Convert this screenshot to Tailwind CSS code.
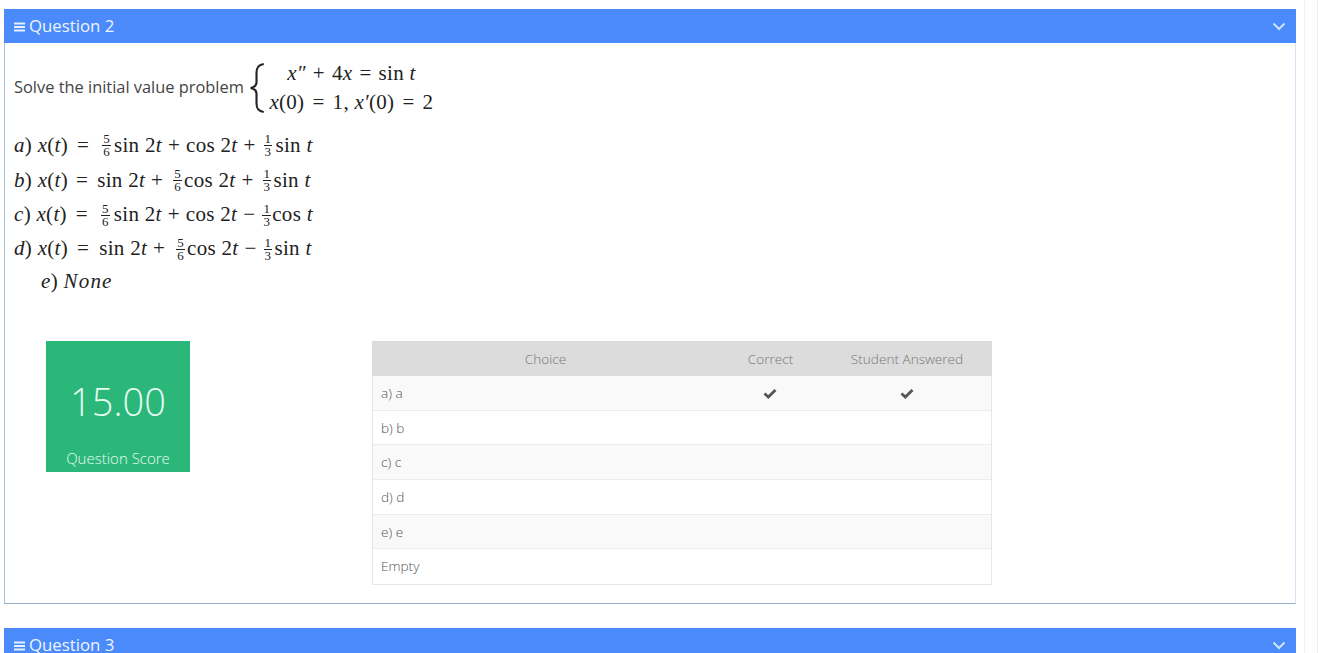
<!DOCTYPE html>
<html>
<head>
<meta charset="utf-8">
<script src="https://cdn.jsdelivr.net/npm/@tailwindcss/browser@4"></script>
</head>
<body class="bg-white overflow-hidden font-['Open_Sans',sans-serif]">
<div class="w-[1321px] h-[653px] overflow-hidden flex bg-white">
  <div class="w-[1305px] pl-[4px] pr-[8px] pt-[9px] border-r border-[#f1f0ef] h-full">
    <div class="h-[34px] bg-[#4a8afb] flex items-center justify-between pl-[10px] pr-[10px] text-white">
      <div class="flex items-center gap-[4px] text-[16.800px] text-[#eef5ff]">
        <svg width="11" height="10" viewBox="0 0 11 10" class="mt-[1px]"><path d="M0 1.500h11M0 5h11M0 8.500h11" stroke="#e6f0ff" stroke-width="1.800"/></svg>
        <span>Question 2</span>
      </div>
      <svg width="14" height="9" viewBox="0 0 14 9"><path d="M1.500 1.500L7 7l5.500-5.500" fill="none" stroke="#cfe3ff" stroke-width="2"/></svg>
    </div>
    <div class="h-[561px] border-l border-r border-b border-l-[#a9c3dc] border-r-[#d5e3f2] border-b-[#8fb0cf] pl-[9px] pt-[15px]">
      <div class="flex items-center h-[60px] text-[#444]">
        <span class="text-[16.400px] leading-none mt-[-1px]">Solve the initial value problem</span>
        <svg width="20" height="52" viewBox="0 0 20 54" class="ml-[3px] mr-[1px]"><path d="M17 2C11 3 9.500 6 9.500 11v10c0 3-2 5-6 6 4 1 6 3 6 6v10c0 5 1.500 8 7.500 9" fill="none" stroke="#222" stroke-width="2.200"/></svg>
        <div class="font-['Liberation_Serif',serif] text-[21px] tracking-[0.3px] leading-[29px] text-[#222] w-[167px] flex flex-col items-center">
          <div class="whitespace-nowrap"><i>x″</i><span class="mx-[7px]">+</span>4<i>x</i><span class="mx-[7px]">=</span>sin <i>t</i></div>
          <div class="whitespace-nowrap"><i>x</i>(0)<span class="mx-[8px]">=</span>1, <i>x′</i>(0)<span class="mx-[8px]">=</span>2</div>
        </div>
      </div>
      <div class="font-['Liberation_Serif',serif] text-[21px] tracking-[0.3px] text-[#222] mt-[10px] whitespace-nowrap">
        <div class="h-[35px] flex items-center"><span><i>a</i>) <i>x</i>(<i>t</i>)<span class="ml-[9px]">=</span></span><span class="inline-flex flex-col items-center text-[13px] leading-[12px] ml-[13px] mr-[3px]"><span class="border-b border-[#222] px-[1px]">5</span><span>6</span></span><span>sin 2<i>t</i><span class="mx-[6px]">+</span>cos 2<i>t</i><span class="mx-[6px]">+</span></span><span class="inline-flex flex-col items-center text-[13px] leading-[12px] ml-[2px] mr-[3px]"><span class="border-b border-[#222] px-[1px]">1</span><span>3</span></span><span>sin <i>t</i></span></div>
        <div class="h-[35px] flex items-center"><span><i>b</i>) <i>x</i>(<i>t</i>)<span class="ml-[8px] mr-[9px]">=</span>sin 2<i>t</i><span class="mx-[6px]">+</span></span><span class="inline-flex flex-col items-center text-[13px] leading-[12px] ml-[4px] mr-[2px]"><span class="border-b border-[#222] px-[1px]">5</span><span>6</span></span><span>cos 2<i>t</i><span class="mx-[6px]">+</span></span><span class="inline-flex flex-col items-center text-[13px] leading-[12px] ml-[3px] mr-[2px]"><span class="border-b border-[#222] px-[1px]">1</span><span>3</span></span><span>sin <i>t</i></span></div>
        <div class="h-[34px] flex items-center"><span><i>c</i>) <i>x</i>(<i>t</i>)<span class="ml-[9px]">=</span></span><span class="inline-flex flex-col items-center text-[13px] leading-[12px] ml-[13px] mr-[4px]"><span class="border-b border-[#222] px-[1px]">5</span><span>6</span></span><span>sin 2<i>t</i><span class="mx-[6px]">+</span>cos 2<i>t</i><span class="mx-[6px]">−</span></span><span class="inline-flex flex-col items-center text-[13px] leading-[12px] ml-[1px] mr-[1px]"><span class="border-b border-[#222] px-[1px]">1</span><span>3</span></span><span>cos <i>t</i></span></div>
        <div class="h-[34px] flex items-center"><span><i>d</i>) <i>x</i>(<i>t</i>)<span class="ml-[9px] mr-[10px]">=</span>sin 2<i>t</i><span class="mx-[6px]">+</span></span><span class="inline-flex flex-col items-center text-[13px] leading-[12px] ml-[5px] mr-[2px]"><span class="border-b border-[#222] px-[1px]">5</span><span>6</span></span><span>cos 2<i>t</i><span class="mx-[6px]">−</span></span><span class="inline-flex flex-col items-center text-[13px] leading-[12px] ml-[1px] mr-[2px]"><span class="border-b border-[#222] px-[1px]">1</span><span>3</span></span><span>sin <i>t</i></span></div>
        <div class="h-[32px] flex items-center pl-[27px]"><span><i>e</i>) <i class="tracking-[1.200px]">None</i></span></div>
      </div>
      <div class="flex mt-[43px] pl-[32px]">
        <div class="w-[144px] h-[131px] bg-[#2bb779] text-[#e6fbf1] flex flex-col items-center shrink-0">
          <div class="text-[38px] font-light leading-none mt-[41px]">15.00</div>
          <div class="text-[15px] font-light leading-none mt-[31px]">Question Score</div>
        </div>
        <div class="ml-[182px] w-[620px] text-[13.600px] font-light text-[#555] border-x border-b border-[#e6e6e6]">
          <div class="flex h-[35px] items-center bg-[#dcdcdc] text-[#777] -mx-px pt-[1px]">
            <div class="w-[347px] text-center">Choice</div>
            <div class="w-[103px] text-center">Correct</div>
            <div class="w-[170px] text-center">Student Answered</div>
          </div>
          <div class="flex h-[35px] items-center bg-[#faf9f9] border-b border-[#ececec] pt-[1px]">
            <div class="w-[346px] pl-[8px]">a) a</div>
            <div class="w-[103px] pl-[1px] flex justify-center"><svg width="14" height="11" viewBox="0 0 14 11"><path d="M1.500 5.500L5.300 9 12.500 2" fill="none" stroke="#555" stroke-width="2.800"/></svg></div>
            <div class="w-[170px] pl-[1px] flex justify-center"><svg width="14" height="11" viewBox="0 0 14 11"><path d="M1.500 5.500L5.300 9 12.500 2" fill="none" stroke="#555" stroke-width="2.800"/></svg></div>
          </div>
          <div class="flex h-[34px] items-center bg-white border-b border-[#ececec] pl-[8px] pt-[1px]">b) b</div>
          <div class="flex h-[35px] items-center bg-[#faf9f9] border-b border-[#ececec] pl-[8px] pt-[1px]">c) c</div>
          <div class="flex h-[35px] items-center bg-white border-b border-[#ececec] pl-[8px] pt-[1px]">d) d</div>
          <div class="flex h-[34px] items-center bg-[#faf9f9] border-b border-[#ececec] pl-[8px] pt-[1px]">e) e</div>
          <div class="flex h-[35px] items-center bg-white pl-[8px]">Empty</div>
        </div>
      </div>
    </div>
    <div class="h-[34px] bg-[#4a8afb] flex items-center justify-between pl-[10px] pr-[10px] mt-[24px] text-white">
      <div class="flex items-center gap-[4px] text-[16.800px] text-[#eef5ff]">
        <svg width="11" height="10" viewBox="0 0 11 10" class="mt-[1px]"><path d="M0 1.500h11M0 5h11M0 8.500h11" stroke="#e6f0ff" stroke-width="1.800"/></svg>
        <span>Question 3</span>
      </div>
      <svg width="14" height="9" viewBox="0 0 14 9"><path d="M1.500 1.500L7 7l5.500-5.500" fill="none" stroke="#cfe3ff" stroke-width="2"/></svg>
    </div>
  </div>
  <div class="w-[12px] h-full"></div>
  <div class="w-px h-full bg-[#f1f0ef]"></div>
</div>
</body>
</html>
